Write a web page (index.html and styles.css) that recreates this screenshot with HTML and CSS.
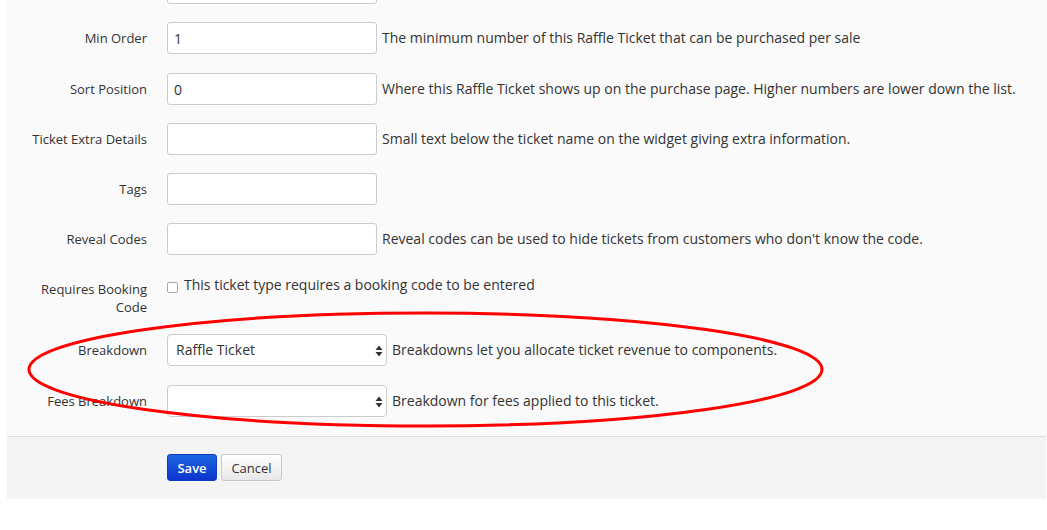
FILE: index.html
```html
<!DOCTYPE html>
<html>
<head>
<meta charset="utf-8">
<link rel="stylesheet" href="styles.css">
</head>
<body>
<div class="page">
  <form class="form">
    <div class="row">
      <label class="lbl"></label>
      <div class="ctl"><input class="txt" type="text" value=""></div>
    </div>
    <div class="row gap19">
      <label class="lbl">Min Order</label>
      <div class="ctl"><input class="txt" type="text" value="1"><span class="help">The minimum number of this Raffle Ticket that can be purchased per sale</span></div>
    </div>
    <div class="row">
      <label class="lbl">Sort Position</label>
      <div class="ctl"><input class="txt" type="text" value="0"><span class="help">Where this Raffle Ticket shows up on the purchase page. Higher numbers are lower down the list.</span></div>
    </div>
    <div class="row">
      <label class="lbl">Ticket Extra Details</label>
      <div class="ctl"><input class="txt" type="text" value=""><span class="help">Small text below the ticket name on the widget giving extra information.</span></div>
    </div>
    <div class="row">
      <label class="lbl">Tags</label>
      <div class="ctl"><input class="txt" type="text" value=""></div>
    </div>
    <div class="row">
      <label class="lbl">Reveal Codes</label>
      <div class="ctl"><input class="txt" type="text" value=""><span class="help">Reveal codes can be used to hide tickets from customers who don't know the code.</span></div>
    </div>
    <div class="row">
      <label class="lbl">Requires Booking Code</label>
      <div class="ctl check"><span class="box"></span><span class="checktext">This ticket type requires a booking code to be entered</span></div>
    </div>
    <div class="row gap19">
      <label class="lbl">Breakdown</label>
      <div class="ctl"><div class="sel"><span class="seltext">Raffle Ticket</span><svg class="arrows" width="8" height="12" viewBox="0 0 8 12"><path d="M4 0.5 L7.5 5 L0.5 5 Z M4 11.5 L7.5 7 L0.5 7 Z" fill="#333"/></svg></div><span class="help">Breakdowns let you allocate ticket revenue to components.</span></div>
    </div>
    <div class="row gap19">
      <label class="lbl">Fees Breakdown</label>
      <div class="ctl"><div class="sel"><span class="seltext"></span><svg class="arrows" width="8" height="12" viewBox="0 0 8 12"><path d="M4 0.5 L7.5 5 L0.5 5 Z M4 11.5 L7.5 7 L0.5 7 Z" fill="#333"/></svg></div><span class="help">Breakdown for fees applied to this ticket.</span></div>
    </div>
  </form>
  <div class="footer">
    <button class="btn save" type="button">Save</button>
    <button class="btn cancel" type="button">Cancel</button>
  </div>
  <svg class="ring" width="1047" height="530" viewBox="0 0 1047 530">
    <ellipse cx="425.5" cy="369.5" rx="396.5" ry="56.5" fill="none" stroke="#ff0000" stroke-width="3"/>
  </svg>
</div>
</body>
</html>
```
FILE: styles.css
```css
html, body {
  margin: 0;
  padding: 0;
  background: #ffffff;
  font-family: "Open Sans", "Liberation Sans", sans-serif;
  font-size: 13px;
  color: #333333;
  overflow: hidden;
}
.page {
  position: relative;
  width: 1047px;
  height: 530px;
  overflow: hidden;
}
.form {
  margin: -28px 0 0 7px;
  width: 1040px;
  background: #fafafa;
}
.row {
  display: flex;
  align-items: flex-start;
  padding-bottom: 18px;
}
.row.gap19 {
  padding-bottom: 19px;
}
.lbl {
  width: 140px;
  flex: none;
  text-align: right;
  padding-top: 7px;
  line-height: 18px;
  min-height: 18px;
  box-sizing: border-box;
  padding-left: 20px;
}
.ctl {
  margin-left: 20px;
  display: flex;
  align-items: center;
  height: 32px;
}
.txt {
  width: 210px;
  height: 32px;
  box-sizing: border-box;
  border: 1px solid #cccccc;
  border-radius: 3px;
  background: #ffffff;
  padding: 0 6px;
  font-family: "Open Sans", "Liberation Sans", sans-serif;
  font-size: 14px;
  color: #333333;
  margin: 0;
}
.help {
  margin-left: 5px;
  line-height: 18px;
  font-size: 14px;
  white-space: nowrap;
}
.check {
  align-items: flex-start;
  height: auto;
  padding-top: 3px;
}
.box {
  width: 11px;
  height: 11px;
  border: 1px solid #a6a6a6;
  border-radius: 2px;
  background: #ffffff;
  box-sizing: border-box;
  margin-top: 6px;
  flex: none;
}
.checktext {
  margin-left: 6px;
  line-height: 18px;
  font-size: 14px;
}
.sel {
  position: relative;
  width: 220px;
  height: 32px;
  box-sizing: border-box;
  border: 1px solid #cccccc;
  border-radius: 4px;
  background: #ffffff;
  display: flex;
  align-items: center;
  padding-left: 8px;
}
.seltext {
  line-height: 18px;
  font-size: 14px;
}
.arrows {
  position: absolute;
  right: 3px;
  top: 10px;
}
.footer {
  margin-left: 7px;
  width: 1039px;
  height: 63px;
  border-top: 1px solid #dddddd;
  background: #f4f4f4;
  box-sizing: border-box;
  display: flex;
  align-items: flex-start;
  padding-left: 160px;
  padding-top: 17px;
  gap: 4px;
}
.btn {
  height: 27px;
  border-radius: 3px;
  font-family: "Open Sans", "Liberation Sans", sans-serif;
  font-size: 13px;
  padding: 0;
  margin: 0;
  cursor: pointer;
}
.save {
  width: 50px;
  border: 1px solid #0b3bc2;
  background: linear-gradient(#1e66e0, #0c35cf);
  color: #ffffff;
  font-weight: 600;
}
.cancel {
  width: 61px;
  border: 1px solid #c8c8c8;
  background: linear-gradient(#ffffff, #e8e8e8);
  color: #333333;
}
.ring {
  position: absolute;
  left: 0;
  top: 0;
  pointer-events: none;
}
```
